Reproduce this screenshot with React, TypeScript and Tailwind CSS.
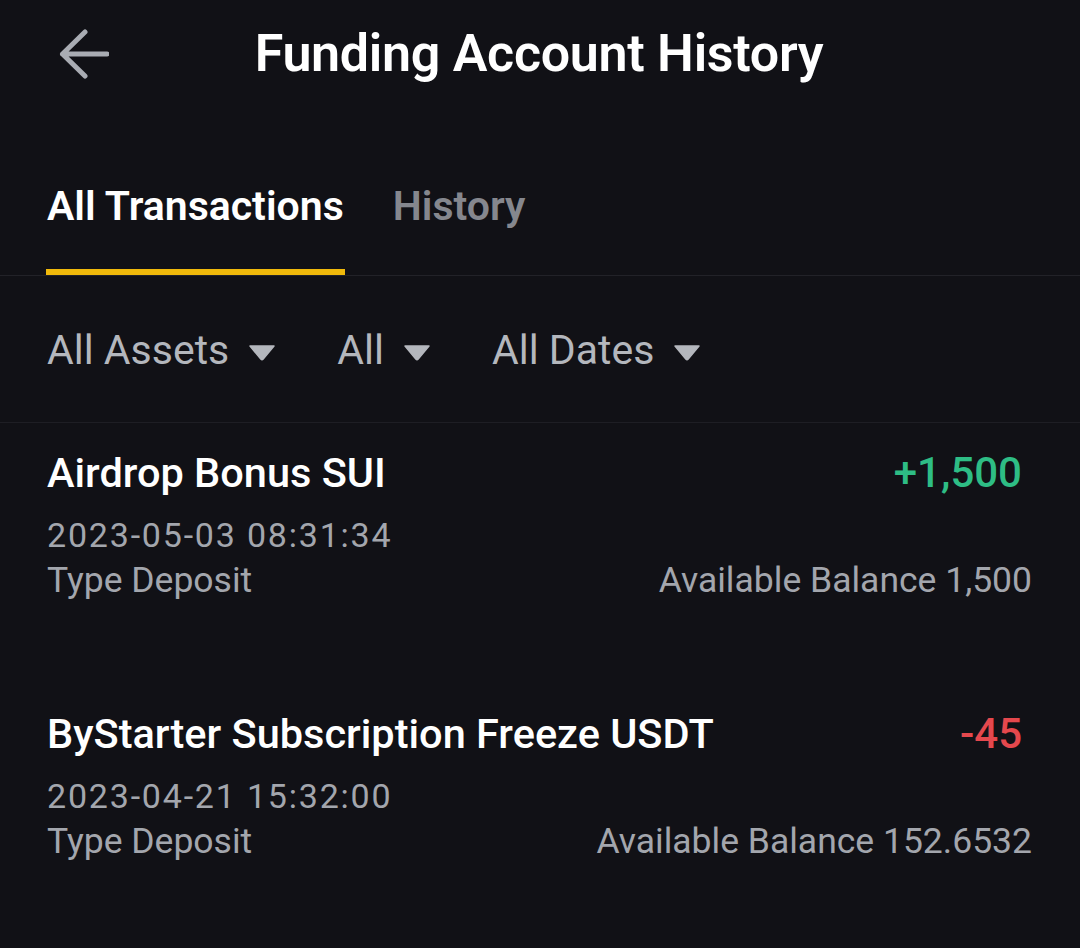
const rows = [
  {
    title: 'Airdrop Bonus SUI',
    amount: '+1,500',
    positive: true,
    date: '2023-05-03 08:31:34',
    type: 'Type Deposit',
    balance: 'Available Balance 1,500',
  },
  {
    title: 'ByStarter Subscription Freeze USDT',
    amount: '-45',
    positive: false,
    date: '2023-04-21 15:32:00',
    type: 'Type Deposit',
    balance: 'Available Balance 152.6532',
  },
];

function Caret() {
  return (
    <svg width="28" height="17" viewBox="0 0 28 17" className="ml-[19px] mt-[4px]">
      <path d="M2 2 H26 L15.2 15 Q14 16.4 12.8 15 Z" fill="#b4b7bd" stroke="#b4b7bd" strokeWidth="1.5" strokeLinejoin="round" />
    </svg>
  );
}

function BackArrow() {
  return (
    <svg width="50" height="50" viewBox="0 0 50 50" className="absolute left-[59px] top-[29px]">
      <path
        d="M48 25 H3.5 M26 3 L3.5 25 L26 47"
        fill="none"
        stroke="#a9acb3"
        strokeWidth="5"
        strokeLinecap="round"
        strokeLinejoin="round"
      />
    </svg>
  );
}

export default function App() {
  return (
    <div
      className="w-[1080px] h-[948px] bg-[#111116] text-white overflow-hidden"
      style={{ fontFamily: 'Roboto, "Noto Sans", sans-serif' }}
    >
      {/* header */}
      <div className="relative h-[108px] flex items-center justify-center">
        <BackArrow />
        <h1 className="text-[52px] font-semibold tracking-[-0.3px] leading-none ml-[-2px]">Funding Account History</h1>
      </div>

      {/* tabs */}
      <div className="pt-[78px] border-b border-[#222228]">
        <div className="flex px-[46px] gap-[48px]">
          <div className="flex flex-col">
            <span className="text-[41px] font-semibold leading-none px-[1px] text-white">All Transactions</span>
            <div className="h-[6px] mt-[42px] bg-[#f0b90b]" />
          </div>
          <span className="text-[41px] font-semibold leading-none text-[#85878e]">History</span>
        </div>
      </div>

      {/* filters */}
      <div className="h-[147px] flex items-center px-[47px] pt-[3px] gap-[61px] border-b border-[#1e1e24] text-[41px] text-[#b4b7bd]">
        <div className="flex items-center">All Assets<Caret /></div>
        <div className="flex items-center">All<Caret /></div>
        <div className="flex items-center">All Dates<Caret /></div>
      </div>

      {/* list */}
      <div className="flex flex-col pl-[47px] pr-[48px] pt-[28px] gap-[112px]">
        {rows.map((r) => (
          <div key={r.title} className="flex flex-col">
            <div className="flex items-center justify-between pr-[10px]">
              <span className="text-[41.5px] font-medium leading-[44px]">{r.title}</span>
              <span
                className={`text-[42px] font-medium leading-[44px] ${r.positive ? 'text-[#2ebd85]' : 'text-[#e5484d]'}`}
              >
                {r.amount}
              </span>
            </div>
            <div className="mt-[20px] text-[34px] tracking-[1.8px] leading-[40px] text-[#a3a6ad]">{r.date}</div>
            <div className="mt-[5px] flex justify-between text-[35.5px] leading-[40px] text-[#a3a6ad]">
              <span>{r.type}</span>
              <span>{r.balance}</span>
            </div>
          </div>
        ))}
      </div>
    </div>
  );
}
